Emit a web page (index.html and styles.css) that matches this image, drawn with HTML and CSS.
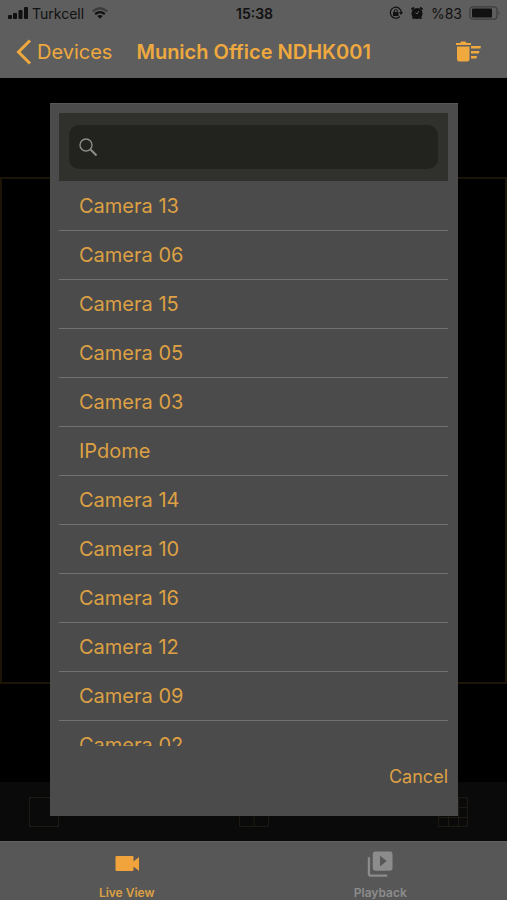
FILE: index.html
```html
<!DOCTYPE html>
<html lang="en">
<head>
<meta charset="utf-8">
<meta name="viewport" content="width=device-width, initial-scale=1">
<title>Munich Office NDHK001</title>
<link rel="stylesheet" href="styles.css">
</head>
<body>
<header class="top">
  <div class="status">
    <div class="status-side">
      <svg width="20" height="14" viewBox="0 0 20 14"><rect x="0" y="9" width="4" height="4" rx="1"/><rect x="5" y="7" width="4" height="6" rx="1"/><rect x="10.500" y="4" width="4" height="9" rx="1"/><rect x="16" y="1" width="4" height="12" rx="1"/></svg>
      <span class="carrier">Turkcell</span>
      <svg class="wifi" width="16" height="12" viewBox="0 0 16 12"><g fill="none" stroke="#111" stroke-width="2.200"><path d="M.8 4.500Q8-2 15.200 4.500" opacity=".45"/><path d="M3.200 7.200Q8 3 12.800 7.200"/></g><path d="M5.300 9Q8 7 10.700 9L8 11.800Z"/></svg>
    </div>
    <time class="clock">15:38</time>
    <div class="status-side status-right">
      <svg width="14" height="14" viewBox="0 0 14 14"><path d="M10.800 10.500A5.500 5.500 0 1 1 12.300 6.500" fill="none" stroke="#111" stroke-width="1.200"/><path d="M10 6h4l-2 3Z"/><rect x="4" y="6" width="5.500" height="4"/><path d="M5.300 6V5a1.500 1.500 0 0 1 3 0v1" fill="none" stroke="#111"/></svg>
      <svg width="14" height="14" viewBox="0 0 14 14"><circle cx="7" cy="7.500" r="5.500"/><path d="M1.500 3.500 4 1.500M12.500 3.500 10 1.500M3.500 11.500l-.7 1.200M10.500 11.500l.7 1.200" stroke="#111" stroke-width="2"/><path d="M5.500 6.500 7 8l2-3" fill="none" stroke="#5e5e5e"/></svg>
      <span>%83</span>
      <svg width="32" height="14" viewBox="0 0 32 14"><rect x="1" y=".8" width="27" height="12.400" rx="3" fill="none" stroke="#3d3d3d" stroke-width="1.200"/><rect x="3" y="2.500" width="20" height="9" rx="1"/><path d="M29.500 5q2 2 0 4Z" fill="#3d3d3d"/></svg>
    </div>
  </div>
  <nav class="navbar">
    <a class="back" href="#devices"><svg width="16" height="26" viewBox="0 0 16 26"><path d="M14 1.500 2.500 13 14 24.500" fill="none" stroke="#efa93f" stroke-width="3"/></svg>Devices</a>
    <h1 class="title">Munich Office NDHK001</h1>
    <button class="clear" type="button" aria-label="Clear all"><svg width="26" height="22" viewBox="0 0 26 22" fill="#efa93f"><path d="M1 2h4L6.300.5h4L11.600 2H16v2H1ZM2 5.500h12.500V18a2.500 2.500 0 0 1-2.500 2.500H4.500A2.500 2.500 0 0 1 2 18ZM16 5h10l-.6 2.400H16ZM16 10h8.500l-.6 2.400H16ZM16 15h6l-.6 2.400H16Z"/></svg></button>
  </nav>
</header>
<main class="stage"><div class="view"></div></main>
<div class="layouts">
  <button type="button" aria-label="Single view"><svg width="30" height="30" viewBox="0 0 30 30"><path d="M.5.5h29v29H.5Z"/></svg></button>
  <button type="button" aria-label="Four views"><svg width="30" height="30" viewBox="0 0 30 30"><path d="M.5.5h29v29H.5ZM15 0v30M0 15h30"/></svg></button>
  <button type="button" aria-label="Nine views"><svg width="30" height="30" viewBox="0 0 30 30"><path d="M.5.5h29v29H.5ZM10.500 0v30M20.500 0v30M0 10.500h30M0 20.500h30"/></svg></button>
</div>
<nav class="tabs">
  <a class="tab active" href="#live"><svg width="24" height="26" viewBox="0 0 24 26" fill="#f2a43c"><path d="M1.500 5h16q1 0 1 1v4.500L24 6v14l-5.500-4.500V19q0 1-1 1h-16q-1 0-1-1V6q0-1 1-1Z"/></svg>Live View</a>
  <a class="tab" href="#playback"><svg width="26" height="26" viewBox="-.5 -.5 27 27" fill="#8c8c8c"><path d="M1.500 6v17q0 2 2 2h17" fill="none" stroke="#8c8c8c" stroke-width="2.400"/><path fill-rule="evenodd" d="M8 0h15.500q2.500 0 2.500 2.500v15q0 2.500-2.500 2.500H8q-2.500 0-2.500-2.500v-15Q5.500 0 8 0ZM13 4.500v11l7-5.500Z"/></svg>Playback</a>
</nav>
<div class="overlay">
  <section class="dialog" role="dialog" aria-label="Select camera">
    <div class="search">
      <label class="field"><svg width="18" height="18" viewBox="0 0 18 18" fill="none" stroke="#8d8e89"><circle cx="7" cy="7" r="6" stroke-width="1.400"/><path d="m11.500 11.500 6 6" stroke-width="2"/></svg><input type="search" aria-label="Search cameras"></label>
    </div>
    <ul class="list">
      <li><button type="button">Camera 13</button></li>
      <li><button type="button">Camera 06</button></li>
      <li><button type="button">Camera 15</button></li>
      <li><button type="button">Camera 05</button></li>
      <li><button type="button">Camera 03</button></li>
      <li><button type="button">IPdome</button></li>
      <li><button type="button">Camera 14</button></li>
      <li><button type="button">Camera 10</button></li>
      <li><button type="button">Camera 16</button></li>
      <li><button type="button">Camera 12</button></li>
      <li><button type="button">Camera 09</button></li>
      <li><button type="button">Camera 02</button></li>
    </ul>
    <footer class="actions"><button type="button">Cancel</button></footer>
  </section>
</div>
</body>
</html>
```
FILE: styles.css
```css
* { box-sizing: border-box; }
body {
  margin: 0;
  height: 100vh;
  display: flex;
  flex-direction: column;
  overflow: hidden;
  background: #000;
  color: #efa93f;
  font-family: Inter, "Liberation Sans", sans-serif;
}
button { margin: 0; padding: 0; border: 0; background: none; color: inherit; font: inherit; }
a { color: inherit; text-decoration: none; }
svg { display: block; flex: none; }

.top { background: #5e5e5e; }
.status {
  height: 26px;
  padding: 0 6px 0 8px;
  display: grid;
  grid-template-columns: 1fr auto 1fr;
  align-items: center;
  color: #111;
  fill: #111;
  font-size: 14px;
}
.status-side { display: flex; align-items: center; gap: 4px; }
.status-right { justify-content: flex-end; gap: 7px; }
.wifi { margin-left: 4px; }
.clock { font-weight: 600; }
.navbar {
  height: 52px;
  padding: 0 26px 0 16px;
  display: flex;
  align-items: center;
  font-size: 20px;
}
.back { display: flex; align-items: center; gap: 5px; }
.title { margin: 0 auto 0 24px; font-size: 20px; font-weight: 600; white-space: nowrap; }

.stage { flex: 1; padding: 99px 0 98px; display: flex; }
.view { flex: 1; border: 2px solid #1d1408; }
.layouts {
  height: 59px;
  padding: 0 29px;
  display: grid;
  grid-template-columns: 1fr auto 1fr;
  align-items: center;
  background: #0a0a0a;
}
.layouts button:last-child { justify-self: end; padding-right: 10px; }
.layouts svg { fill: none; stroke: #1e1a13; }

.tabs { height: 59px; display: flex; background: #575757; border-top: 1px solid #606060; }
.tab {
  flex: 1;
  padding-top: 9px;
  display: flex;
  flex-direction: column;
  align-items: center;
  gap: 8px;
  color: #8c8c8c;
  font-size: 12px;
  line-height: 16px;
  font-weight: 600;
}
.tab.active { color: #dda044; }

.overlay { position: absolute; inset: 0; padding: 103px 49px 84px 50px; display: flex; }
.dialog {
  flex: 1;
  min-height: 0;
  padding: 9px 10px 10px 9px;
  display: flex;
  flex-direction: column;
  background: #4b4b4b;
  color: #dda044;
  border-top: 1px solid #585858;
}
.search { padding: 12px 10px; background: #30302c; }
.field {
  height: 44px;
  padding: 0 10px;
  display: flex;
  align-items: center;
  gap: 8px;
  border-radius: 10px;
  background: #22231e;
}
.field input {
  flex: 1;
  min-width: 0;
  border: 0;
  outline: 0;
  background: none;
  color: #ddd;
  font: inherit;
}
.list { flex: 1; min-height: 0; margin: 0; padding: 1px 0 0; overflow: hidden; list-style: none; }
.list li { height: 49px; border-bottom: 1px solid #717171; }
.list button { width: 100%; height: 100%; padding: 0 20px; font-size: 20px; text-align: left; }
.actions { height: 60px; display: flex; align-items: center; justify-content: flex-end; font-size: 18px; }
```
